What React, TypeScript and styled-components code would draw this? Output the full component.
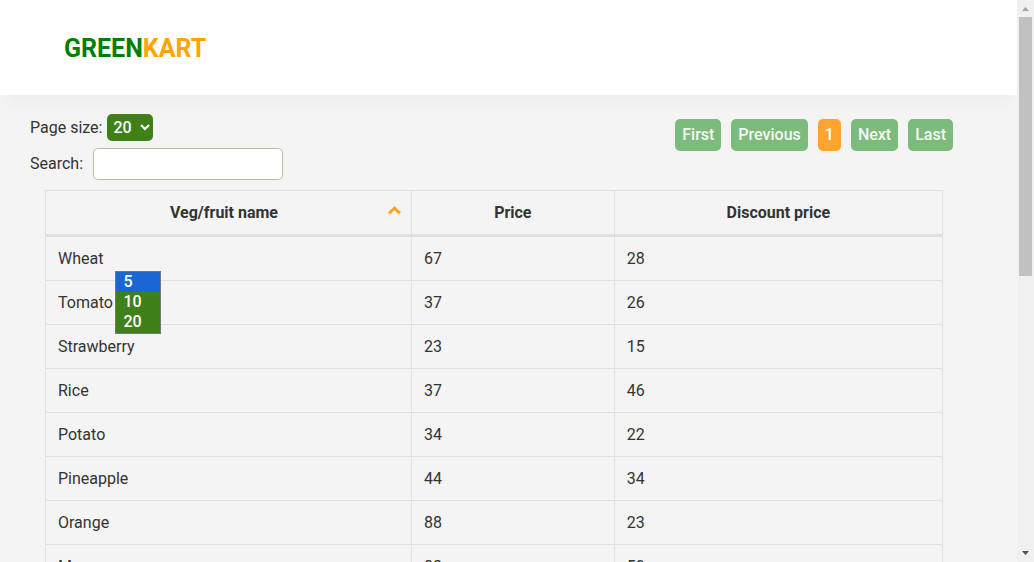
import React from "react";
import styled, { createGlobalStyle } from "styled-components";

const GlobalStyle = createGlobalStyle`
  *, *::before, *::after { box-sizing: border-box; }
  body {
    margin: 0;
    background: #f4f4f4;
    color: #333;
    font: 400 16px/20px Roboto, sans-serif;
  }
`;

const Shell = styled.div`
  display: flex;
  height: 100vh;
  overflow: hidden;
`;

const Page = styled.div`
  flex: 1;
  min-width: 0;
  overflow: hidden;
`;

const Header = styled.header`
  padding: 33px 64px 30px;
  background: #fff;
  box-shadow: 0 10px 20px -5px rgba(0, 0, 0, 0.04);
`;

const Brand = styled.a`
  display: block;
  color: green;
  font-size: 25px;
  font-weight: 700;
  line-height: 32px;
  text-decoration: none;

  span { color: orange; }
`;

const Toolbar = styled.section`
  display: flex;
  justify-content: space-between;
  align-items: flex-start;
  padding: 19px 64px 10px 30px;
`;

const Filters = styled.div`
  display: grid;
  gap: 7px;
`;

const Field = styled.div<{ $gap: number }>`
  display: flex;
  align-items: center;
  gap: ${({ $gap }) => $gap}px;
`;

const PageSize = styled.select`
  width: 46px;
  height: 27px;
  padding: 0 3px 0 2px;
  border: 0;
  border-radius: 5px;
  background: #3f8118;
  color: #fff;
  font: 500 16px/20px Roboto, sans-serif;
`;

const SearchBox = styled.input`
  width: 190px;
  height: 32px;
  padding: 4px 8px;
  border: 1px solid #bdbda0;
  border-radius: 5px;
  background: #fff;
  font: inherit;
`;

const SelectAnchor = styled.div`
  position: relative;
  display: flex;
`;

const Options = styled.ul`
  position: absolute;
  z-index: 1;
  top: 157px;
  left: 8px;
  width: 46px;
  margin: 0;
  padding: 0 0 1px;
  border: 1px solid #767676;
  background: #3f8118;
  color: #fff;
  font-weight: 500;
  list-style: none;
`;

const Option = styled.li<{ $active?: boolean }>`
  padding: 0 7px;
  background: ${({ $active }) => ($active ? "#1967d2" : "transparent")};
`;

const Pager = styled.nav`
  display: flex;
  gap: 10px;
  padding-top: 5px;
`;

const PagerButton = styled.button<{ $current?: boolean }>`
  height: 32px;
  padding: 0 7px;
  border: 0;
  border-radius: 5px;
  background: ${({ $current }) => ($current ? "#ffa52f" : "#7cbb7c")};
  color: ${({ $current }) => ($current ? "#fff" : "#f4f9f4")};
  font: 500 16px/20px Roboto, sans-serif;
`;

const TableArea = styled.main`
  padding: 0 74px 0 45px;
`;

const Table = styled.table`
  width: 100%;
  table-layout: fixed;
  border-collapse: collapse;

  th, td { border: 1px solid #dee2e6; }
`;

const HeadCell = styled.th<{ $width: string; $sorted?: boolean }>`
  position: relative;
  width: ${({ $width }) => $width};
  height: 45px;
  padding: 0 ${({ $sorted }) => ($sorted ? 21 : 12)}px 0 12px;
  font-weight: 700;

  && { border-bottom: 3px solid #dee2e6; }
`;

const SortIcon = styled.svg`
  position: absolute;
  top: 15px;
  right: 10px;
`;

const Cell = styled.td`
  height: 44px;
  padding: 0 12px;

  tr:first-child > & { height: 45px; }
`;

const Scrollbar = styled.div`
  display: flex;
  flex-direction: column;
  width: 17px;
  background: #f0f0f0;
`;

const Arrow = styled.svg`
  flex: none;
`;

const Track = styled.div`
  flex: 1;
  padding: 0 2px;
`;

const Thumb = styled.div`
  height: 49%;
  background: #c1c1c1;
`;

const items: [string, number, number][] = [
  ["Wheat", 67, 28],
  ["Tomato", 37, 26],
  ["Strawberry", 23, 15],
  ["Rice", 37, 46],
  ["Potato", 34, 22],
  ["Pineapple", 44, 34],
  ["Orange", 88, 23],
  ["Mango", 88, 50],
];

const sizes = [5, 10, 20];

export default function App() {
  return (
    <Shell>
      <GlobalStyle />
      <Page>
        <Header>
          <Brand href="#">GREEN<span>KART</span></Brand>
        </Header>
        <Toolbar>
          <Filters>
            <Field $gap={5}>
              <label htmlFor="page-size">Page size:</label>
              <SelectAnchor>
                <PageSize id="page-size" defaultValue="20">
                  {sizes.map((n) => <option key={n} value={n}>{n}</option>)}
                </PageSize>
                <Options role="listbox" aria-label="Page size">
                  {sizes.map((n) => (
                    <Option key={n} role="option" aria-selected={n === 5} $active={n === 5}>{n}</Option>
                  ))}
                </Options>
              </SelectAnchor>
            </Field>
            <Field $gap={10}>
              <label htmlFor="search">Search:</label>
              <SearchBox id="search" type="text" />
            </Field>
          </Filters>
          <Pager aria-label="Pagination">
            <PagerButton>First</PagerButton>
            <PagerButton>Previous</PagerButton>
            <PagerButton $current aria-current="page">1</PagerButton>
            <PagerButton>Next</PagerButton>
            <PagerButton>Last</PagerButton>
          </Pager>
        </Toolbar>
        <TableArea>
          <Table>
            <thead>
              <tr>
                <HeadCell $width="40.8%" $sorted aria-sort="ascending">
                  Veg/fruit name
                  <SortIcon width="13" height="9" viewBox="0 0 13 9" aria-hidden="true">
                    <path d="M1.1 7.4 L6.5 2.2 L11.9 7.4" fill="none" stroke="#ffa52f" strokeWidth="3.1" />
                  </SortIcon>
                </HeadCell>
                <HeadCell $width="22.6%">Price</HeadCell>
                <HeadCell $width="36.6%">Discount price</HeadCell>
              </tr>
            </thead>
            <tbody>
              {items.map(([name, price, discount]) => (
                <tr key={name}>
                  <Cell>{name}</Cell>
                  <Cell>{price}</Cell>
                  <Cell>{discount}</Cell>
                </tr>
              ))}
            </tbody>
          </Table>
        </TableArea>
      </Page>
      <Scrollbar aria-hidden="true">
        <Arrow width="17" height="17" viewBox="0 0 17 17">
          <path d="M5 11 L8.5 7 L12 11 Z" fill="#a3a3a3" />
        </Arrow>
        <Track><Thumb /></Track>
        <Arrow width="17" height="17" viewBox="0 0 17 17">
          <path d="M5 6 L12 6 L8.5 10 Z" fill="#505050" />
        </Arrow>
      </Scrollbar>
    </Shell>
  );
}
